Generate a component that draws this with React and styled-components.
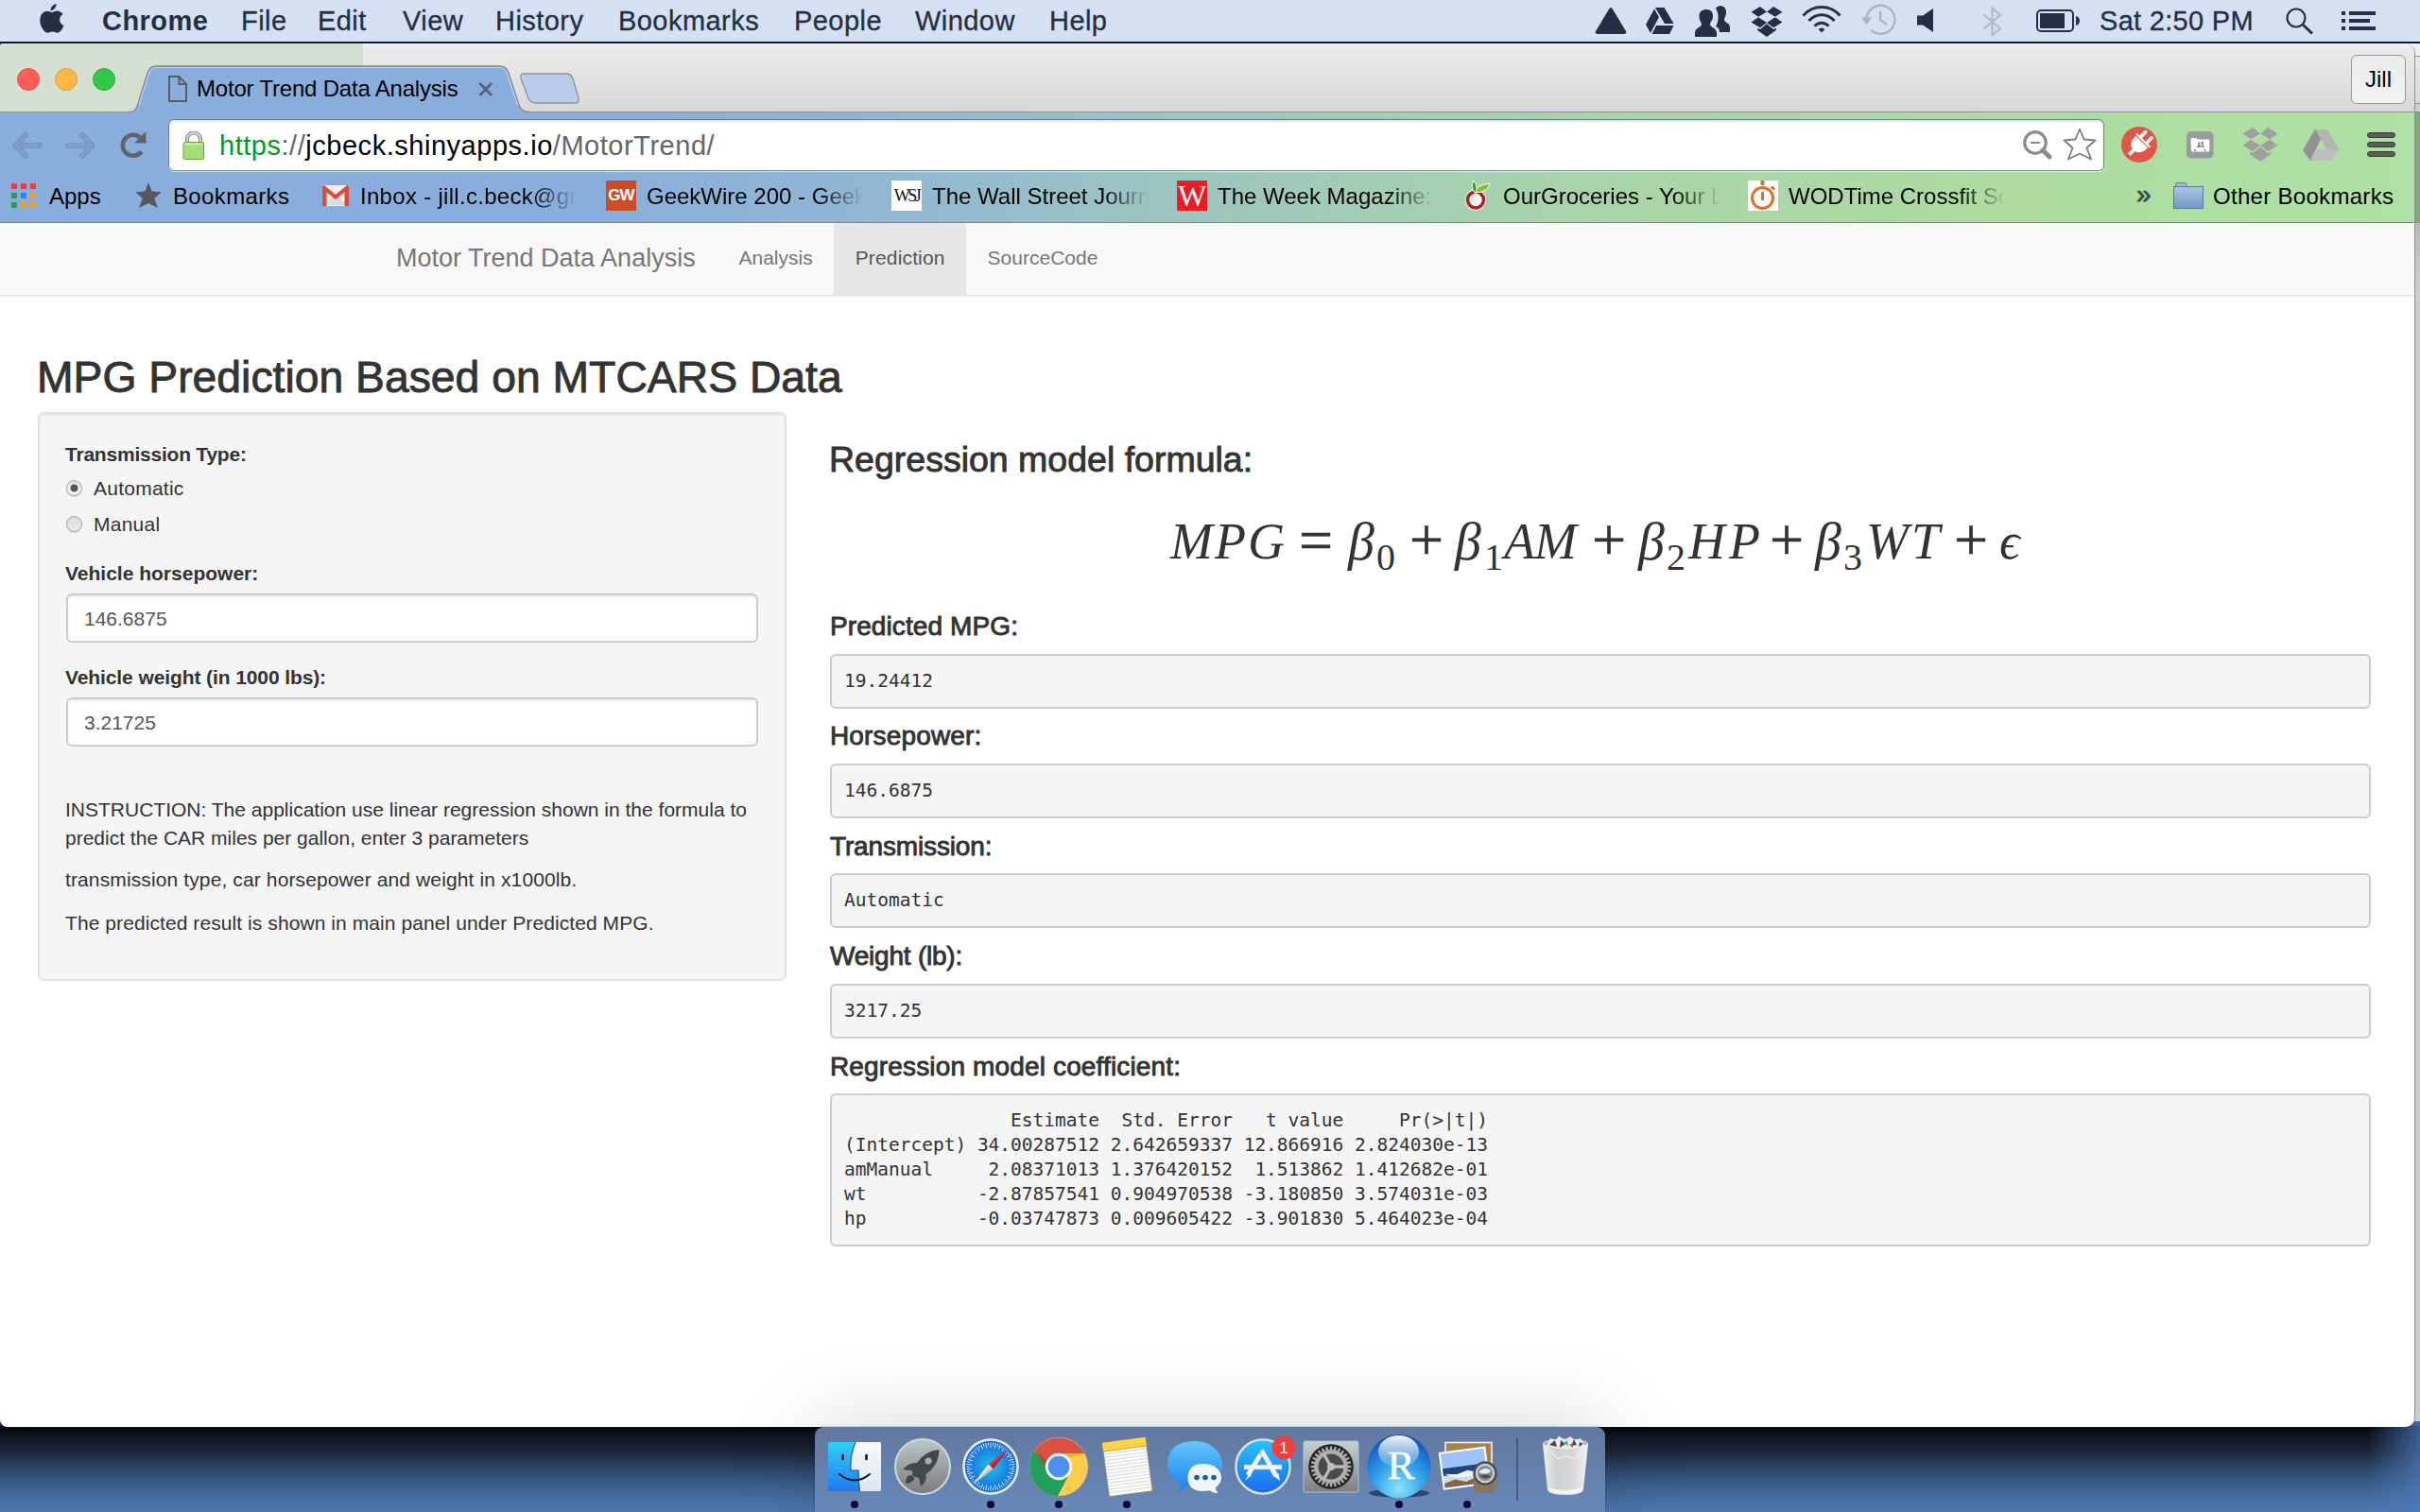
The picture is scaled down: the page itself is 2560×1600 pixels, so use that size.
import React from 'react';
import styled, { createGlobalStyle, css } from 'styled-components';

const sans = '"Liberation Sans", Arial, Helvetica, sans-serif';
const serif = '"Liberation Serif", "Times New Roman", serif';
const mono = '"DejaVu Sans Mono", Menlo, monospace';
const ink = '#232f42';

const GlobalStyle = createGlobalStyle`
  * { box-sizing: border-box; }
  body { margin: 0; overflow: hidden; }
  svg { display: block; flex: none; }
`;

const Desktop = styled.div`
  position: relative;
  width: 2560px;
  height: 1600px;
  overflow: hidden;
  font-family: ${sans};
  background:
    linear-gradient(to left, rgba(75, 120, 182, 0.75), rgba(75, 120, 182, 0) 56px),
    linear-gradient(to bottom, #1d5285 1505px, #04070c 1510px, #0d131d 1518px, #1a2436 1535px, #2c4364 1553px, #3b608e 1573px, #4871a6 1590px, #4c76ad 1600px);
`;

/* ---------- menu bar ---------- */

const MenuBar = styled.header`
  display: flex;
  align-items: flex-start;
  height: 46px;
  background: #d5e1f3;
  border-bottom: 2px solid #0d1c38;
  color: ${ink};
  font-size: 29px;
  line-height: 44px;
`;

const AppleSlot = styled.span`
  width: 108px;
  padding: 4px 0 0 42px;
`;

const Menus = styled.nav`
  display: grid;
  grid-template-columns: 147px 81px 90px 98px 130px 186px 128px 142px 577px;
  letter-spacing: 0.45px;
  white-space: nowrap;
`;

const MenuItem = styled.span`
  font-weight: ${(p) => (p.$bold ? 700 : 400)};
  -webkit-text-stroke: ${(p) => (p.$bold ? '0' : '0.3px')} ${ink};
`;

const StatusArea = styled.div`
  display: grid;
  grid-template-columns: 54px 52px 59px 54px 63px 59px 69px 57px 67px 197px 59px 40px;
  height: 44px;
`;

const StatusSlot = styled.span`
  padding-top: ${(p) => p.$top || 0}px;
`;

const Clock = styled.span`
  letter-spacing: 0.3px;
  white-space: nowrap;
  -webkit-text-stroke: 0.3px ${ink};
`;

/* ---------- browser window ---------- */

const BackWindow = styled.div`
  position: absolute;
  top: 46px;
  left: 2520px;
  width: 40px;
  height: 1458px;
  background: linear-gradient(
    to bottom,
    #f0f0f0 13px, #8f8f8f 13px, #8f8f8f 14px, #e6e6e6 14px, #dadada 63px,
    #8f8f8f 63px, #8f8f8f 64px, #cfcfcf 64px, #cfcfcf 72px,
    #7da877 72px, #7da877 190px, #b9bbba 190px, #cbcdcc 260px
  );
`;

const Window = styled.main`
  position: absolute;
  top: 46px;
  left: 0;
  width: 2555px;
  height: 1464px;
  display: flex;
  flex-direction: column;
  overflow: hidden;
  background: #fff;
  border-right: 1px solid #8f9190;
  border-radius: 4px 10px 10px 8px;
`;

const TabStrip = styled.div`
  display: flex;
  align-items: flex-start;
  flex: none;
  height: 73px;
  background:
    linear-gradient(#8d918f, #8d918f) 0 72px / 100% 1px no-repeat,
    linear-gradient(#d5dfd2, #d5dfd2) 0 0 / 384px 100% no-repeat,
    linear-gradient(to bottom, #f4f4f4, #ebebeb 4px, #e3e3e3 35px, #d7d7d7);
`;

const Lights = styled.div`
  display: flex;
  gap: 16px;
  width: 136px;
  padding: 26px 0 0 18px;
`;

const Light = styled.i`
  width: 24px;
  height: 24px;
  flex: none;
  border-radius: 50%;
  background: ${(p) => p.$fill};
  border: 1px solid ${(p) => p.$edge};
`;

const Tab = styled.div`
  position: relative;
  display: flex;
  align-items: flex-start;
  width: 424px;
  height: 52px;
  margin-top: 23px;
  padding: 11px 0 0 42px;
`;

const TabShape = styled.svg`
  position: absolute;
  inset: 0;
`;

const TabTitle = styled.span`
  position: relative;
  width: 298px;
  margin-left: 10px;
  font-size: 24px;
  line-height: 28px;
  letter-spacing: -0.2px;
  color: #000;
  white-space: nowrap;
`;

const Raised = styled.span`
  position: relative;
  padding-top: ${(p) => p.$top || 0}px;
`;

const NewTab = styled.span`
  margin: 31px 0 0 -11px;
`;

const ProfileButton = styled.button`
  width: 58px;
  height: 52px;
  margin: 12px 9px 0 auto;
  padding: 0;
  border: 1px solid #9a9a9a;
  border-radius: 6px;
  background: linear-gradient(#ebebeb, #f3f3f3);
  font: 24px/50px ${sans};
  color: #000;
`;

const Chrome = styled.div`
  flex: none;
  height: 117px;
  border-bottom: 1px solid #6f8a82;
  background: linear-gradient(
    97deg,
    #8aaedc 0, #8aaedc 640px, #92b8d3 960px, #9bc3c3 1200px, #a5cfb2 1500px,
    #a9d5a8 1750px, #addba0 2100px, #aee1a4 2540px
  );
`;

const Toolbar = styled.div`
  display: flex;
  align-items: flex-start;
  height: 66px;
`;

const NavButtons = styled.div`
  display: grid;
  grid-template-columns: 55px 58px 53px;
  width: 178px;
  padding: 20px 0 0 13px;
`;

const Omnibox = styled.div`
  display: flex;
  align-items: flex-start;
  width: 2048px;
  height: 55px;
  margin-top: 7px;
  padding-left: 14px;
  background: #fff;
  border: 1px solid #68808a;
  border-bottom-color: #7c9490;
  border-radius: 6px;
  box-shadow: 0 1px 1px rgba(255, 255, 255, 0.6), inset 0 2px 2px rgba(0, 0, 0, 0.12);
`;

const Url = styled.span`
  width: 1909px;
  margin-left: 15px;
  font-size: 29px;
  line-height: 54px;
  letter-spacing: 0.53px;
  color: #666;
  white-space: nowrap;
`;

const UrlPart = styled.span`
  color: ${(p) => (p.$secure ? '#0a9a12' : '#000')};
`;

const IconSlot = styled.span`
  padding-top: ${(p) => p.$top}px;
  margin-left: ${(p) => p.$left || 0}px;
`;

const Extensions = styled.div`
  display: grid;
  grid-template-columns: 69px 59px 64px 68px 40px;
  padding-left: 18px;
`;

const BookmarksBar = styled.div`
  display: flex;
  align-items: center;
  height: 44px;
  font-size: 24px;
  line-height: 44px;
  color: #000;
  white-space: nowrap;
`;

const BarLink = styled.a`
  display: flex;
  align-items: center;
  width: ${(p) => p.$width}px;
  padding-left: ${(p) => p.$inset || 0}px;
  letter-spacing: ${(p) => p.$spacing || 0}px;
  flex: none;
`;

const BarText = styled.span`
  margin-left: ${(p) => p.$gap || 10}px;
  padding-top: 1px;
`;

const FadeText = styled(BarText)`
  flex: none;
  width: 256px;
  mask-image: linear-gradient(to right, #000 180px, transparent 230px);
`;

const Favicon = styled.span`
  display: flex;
  align-items: center;
  justify-content: center;
  width: 32px;
  height: 32px;
  flex: none;
  background: ${(p) => p.$bg};
  color: ${(p) => p.$fg};
  font: ${(p) => p.$font};
  letter-spacing: ${(p) => p.$tight || 0}px;
`;

const More = styled.span`
  width: 39px;
  margin-left: auto;
  font-size: 28px;
  line-height: 36px;
  padding-bottom: 3px;
  color: #3d4a3c;
  -webkit-text-stroke: 0.8px #3d4a3c;
`;

/* ---------- page ---------- */

const Navbar = styled.nav`
  display: flex;
  flex: none;
  height: 78px;
  padding-left: 419px;
  background: #f8f8f8;
  border-bottom: 2px solid #e7e7e7;
  line-height: 73px;
  color: #777;
  font-size: 21px;
`;

const Brand = styled.span`
  width: 340px;
  font-size: 27px;
  line-height: 75px;
  white-space: nowrap;
`;

const NavLink = styled.a`
  padding: 0 22.5px;
  height: 76px;
  ${(p) => p.$active && css`
    background: #e7e7e7;
    color: #555;
    letter-spacing: 0.15px;
  `}
`;

const Page = styled.section`
  display: flex;
  flex-direction: column;
  padding: 60px 46px 0 40px;
  color: #333;
`;

const medium = css`
  font-weight: 400;
  -webkit-text-stroke: 0.9px #333;
`;

const PageTitle = styled.h2`
  ${medium}
  margin: 0 0 12px -1px;
  font-size: 46.3px;
  line-height: 50px;
`;

const Columns = styled.div`
  display: grid;
  grid-template-columns: 792px 1630px;
  column-gap: 46px;
  align-items: start;
`;

const Well = styled.form`
  display: flex;
  flex-direction: column;
  height: 602px;
  padding: 28px 28px 28px 27px;
  background: #f5f5f5;
  border: 2px solid #e3e3e3;
  border-radius: 6px;
  box-shadow: inset 0 2px 2px rgba(0, 0, 0, 0.05);
  font-size: 21px;
  line-height: 30px;
`;

const Label = styled.label`
  margin-top: ${(p) => p.$top || 0}px;
  font-weight: 700;
  letter-spacing: ${(p) => p.$spacing || 0}px;
`;

const Choice = styled.label`
  display: flex;
  margin-top: ${(p) => p.$top}px;
  letter-spacing: 0.25px;
`;

const Radio = styled.i`
  width: 17px;
  height: 17px;
  margin: 6px 12px 0 1px;
  border: 1px solid #a3a3a3;
  border-radius: 50%;
  background: ${(p) => (p.$on
    ? 'radial-gradient(circle, #555 0 3.6px, transparent 4.4px), linear-gradient(#e3e3e3, #f3f3f3)'
    : 'linear-gradient(#dcdcdc, #ececec)')};
  box-shadow: 0 1px 1px rgba(0, 0, 0, 0.15);
`;

const Field = styled.input`
  width: 732px;
  height: 52px;
  margin: 6px 0 0 1px;
  padding: 1px 17px 0;
  border: 2px solid #ccc;
  border-radius: 6px;
  background: #fff;
  box-shadow: inset 0 2px 2px rgba(0, 0, 0, 0.075);
  font: 21px ${sans};
  color: #555;
  outline: none;
`;

const Note = styled.p`
  margin: ${(p) => p.$top}px 0 0;
  letter-spacing: ${(p) => p.$spacing || 0}px;
  white-space: nowrap;
`;

const Results = styled.div`
  display: flex;
  flex-direction: column;
`;

const SectionTitle = styled.h3`
  ${medium}
  margin: 30px 0 37px -1px;
  font-size: 37.5px;
  line-height: 40px;
`;

const Formula = styled.div`
  display: grid;
  grid-template-columns: 136px 52px 30px 35px 48px 31px 21px 93px 49px 30px 23px 86px 48px 30px 24px 93px 48px 30px;
  height: 105px;
  padding-left: 360px;
  font-family: ${serif};
  line-height: 61px;
  white-space: nowrap;
`;

const Term = styled.i`
  font-size: 54px;
  letter-spacing: ${(p) => p.$spacing || 0}px;
`;

const Greek = styled.i`
  font-size: 56px;
`;

const Operator = styled.span`
  font-size: 64px;
  line-height: 58px;
  -webkit-text-stroke: 0.6px #333;
`;

const Index = styled.span`
  padding-top: 16px;
  font-size: 40px;
`;

const OutputTitle = styled.h4`
  ${medium}
  margin: 0;
  font-size: 28px;
  line-height: 30px;
  letter-spacing: ${(p) => p.$spacing}px;
`;

const Output = styled.pre`
  margin: 13.6px 0 14.8px;
  padding: 14px 13px;
  border: 2px solid #ccc;
  border-radius: 6px;
  background: #f5f5f5;
  font: 19.5px/26px ${mono};
`;

/* ---------- dock ---------- */

const Dock = styled.footer`
  position: absolute;
  top: 1510px;
  left: 862px;
  display: flex;
  width: 836px;
  height: 90px;
  padding-left: 6px;
  border-radius: 9px 9px 0 0;
  background: linear-gradient(#62799f, #6480ac 50%, #6888b9);
  box-shadow: 0 0 3px rgba(0, 0, 0, 0.35), 0 0 90px rgba(0, 0, 0, 0.17);
`;

const DockItem = styled.div`
  display: flex;
  flex-direction: column;
  align-items: center;
  width: 72px;
`;

const RunningDot = styled.i`
  width: 8px;
  height: 8px;
  border-radius: 50%;
  background: #050a38;
`;

const Separator = styled.i`
  width: 2px;
  height: 66px;
  margin: 12px 14px 0 16px;
  background: #3f5b8b;
`;

/* ---------- icon drawings ---------- */

const AppleLogo = () => (
  <svg width="26" height="32" viewBox="0 0 26 32" fill={ink}>
    <path d="M17.6 0c.3 3.600-2.900 7.300-6 7.200C11.200 4 14.200.6 17.600 0zM13 8.900c1.200 0 2.800-1.400 5.300-1.400 2.600 0 4.900 1.300 6.200 3.500-5.100 3-4.100 9.900.9 12-1.200 3.600-4 7.800-6.700 7.800-2 0-2.700-1.200-5.100-1.200s-3.200 1.200-5 1.200C4.800 30.800.3 24 .3 17.600c0-6.200 3.800-9.900 7.500-9.900 2.300 0 3.900 1.200 5.200 1.200z" />
  </svg>
);

const DropboxShape = ({ w, h, fill }) => (
  <svg width={w} height={h} viewBox="0 0 38 36" fill={fill}>
    <path d="M11 0 19 6.200 9 12.200 0.500 6.500zM27 0 19 6.200 29 12.200 37.500 6.500zM0.500 18.700 9 12.700 19 19 11 25zM37.500 18.700 29 12.700 19 19 27 25zM19 20.500 27 27 30 25.500V28L19 36 8 28V25.500L11 27z" />
  </svg>
);

const StatusIcons = {
  triangle: (
    <svg width="34" height="28" viewBox="0 0 34 28" fill={ink}><path d="M15.500 1Q17 -1 18.500 1L33 25Q34 28 31 28H3Q0 28 1 25z" /></svg>
  ),
  drive: (
    <svg width="30" height="28" viewBox="0 0 30 28" fill={ink}>
      <path d="M10 0H19.500L29.500 17H20zM9 1.500 14 10 5 27 0 18zM11 19H29.500L25 28H6.500z" />
    </svg>
  ),
  people: (
    <svg width="38" height="33" viewBox="0 0 38 33" fill={ink}>
      <path d="M22 3C24-1 33-1 33 7c0 4-2 6-2 8 0 3 6 3 6 8v5H26c0-4-2-5-4-6 3-4 4-14 0-19z" />
      <path d="M12 4c5 0 7 3 7 7 0 5-3 6-3 9s7 3 7 9v4H0v-4c0-6 7-6 7-9S4.500 16 4.500 11C4.500 7 7 4 12 4z" />
    </svg>
  ),
  wifi: (
    <svg width="42" height="30" viewBox="0 0 42 30" fill="none" stroke={ink} strokeWidth="3">
      <path d="M1.500 10.500C12-1.500 30-1.500 40.500 10.500M7.500 16C15 7.500 27 7.500 34.500 16M13.500 21.500C18 17 24 17 28.500 21.500" />
      <path d="M21 28.500 17.500 25Q21 22 24.500 25z" fill={ink} stroke="none" />
    </svg>
  ),
  timeMachine: (
    <svg width="38" height="34" viewBox="0 0 38 34" fill="none" stroke="#a7b3c5" strokeWidth="2.200">
      <path d="M5.500 16A15 15 0 1 1 10 27.500M20 8V17L27 22" />
      <path d="M0 14.500H11L5.500 22z" fill="#a7b3c5" stroke="none" />
    </svg>
  ),
  speaker: (
    <svg width="20" height="26" viewBox="0 0 20 26" fill={ink}><path d="M0 7.500H6L17 0V25L6 17.500H0z" /></svg>
  ),
  bluetooth: (
    <svg width="22" height="32" viewBox="0 0 22 32" fill="none" stroke="#adb9ca" strokeWidth="2"><path d="M1.500 8.500 19 23 10.500 30.500V1.500L19 9 1.500 23.500" /></svg>
  ),
  battery: (
    <svg width="47" height="24" viewBox="0 0 47 24" fill={ink}>
      <rect x="1" y="1" width="38" height="22" rx="4" fill="none" stroke={ink} strokeWidth="2" />
      <rect x="4" y="4" width="26" height="16" /><path d="M42 7Q46 8 46 12T42 17z" />
    </svg>
  ),
  search: (
    <svg width="30" height="29" viewBox="0 0 30 29" fill="none" stroke={ink} strokeWidth="2.200"><circle cx="11" cy="11" r="9.500" /><path d="M18 18 28 27.500" strokeWidth="3" /></svg>
  ),
  list: (
    <svg width="37" height="20" viewBox="0 0 37 20" fill={ink}>
      <path d="M0 0h4v4H0zM8 0h28v4H8zM0 8h4v4H0zM8 8h22v4H8zM0 16h4v4H0zM8 16h28v4H8z" />
    </svg>
  ),
};

const Arrow = ({ flip }) => (
  <svg width="33" height="30" viewBox="0 0 33 30" fill="none" strokeLinecap="round" strokeLinejoin="round">
    <g transform={flip ? 'translate(33 0) scale(-1 1)' : undefined}>
      <path d="M14 4 3.500 15 14 26M3.500 15H29" stroke="#6f91c0" strokeWidth="5.600" />
      <path d="M14 4 3.500 15 14 26M3.500 15H29" stroke="#7d9dcb" strokeWidth="4" />
    </g>
  </svg>
);

const Reload = () => (
  <svg width="31" height="30" viewBox="0 0 31 30">
    <path d="M23.500 21.500A11 11 0 1 1 22 6.500" fill="none" stroke="#5f646c" strokeWidth="4.600" />
    <path d="M28.500 0V12.500H16z" fill="#5f646c" />
  </svg>
);

const PageIcon = () => (
  <svg width="20" height="28" viewBox="0 0 20 28" fill="none" stroke="#5a5d63" strokeWidth="2"><path d="M1 1H11.500L19 9V27H1zM11.500 1V9H19" /></svg>
);

const Lock = () => (
  <svg width="24" height="31" viewBox="0 0 24 31">
    <path d="M5 14V8a7 6.500 0 0 1 14 0V14" fill="none" stroke="#8c8c8c" strokeWidth="4" />
    <path d="M5 14V8a7 6.500 0 0 1 14 0V14" fill="none" stroke="#d9d9d9" strokeWidth="1.800" />
    <rect x="1" y="11.500" width="21.500" height="18" rx="1.500" fill="#a4dd79" stroke="#6aa646" />
    <path d="M2 13.500h19.500" stroke="#c9f0ab" strokeWidth="2" />
  </svg>
);

const starPath = 'M18 1.500 22.500 12.500 34.500 13.500 25.500 21.500 30 33.500 18 27.500 6 33.500 10.500 21.500 1.500 13.500 13.500 12.500z';

const DriveGray = () => (
  <svg width="38" height="34" viewBox="0 0 38 34">
    <path d="M13 0H26L38 21 31 33H8L0 22zM19 10 13.500 21H25z" fillRule="evenodd" fill="#b5b5b5" />
    <path d="M13 0 19 10 8 33 0 22z" fill="#929292" /><path d="M8 33 13.500 21H38L31 33z" fill="#bdbdbd" />
  </svg>
);

const Plug = () => (
  <svg width="38" height="38" viewBox="0 0 38 38">
    <circle cx="19" cy="19" r="19" fill="#e0574a" />
    <g transform="rotate(45 19 19)" fill="#fff">
      <rect x="12.500" y="3" width="3.600" height="11" rx="1.800" /><rect x="21.500" y="3" width="3.600" height="11" rx="1.800" />
      <path d="M8.500 12H29V14H8.500z" />
      <path d="M9.800 15H27.700C28.200 22 25 26.500 20.800 27V34H17V27C12.500 26.500 9.300 22 9.800 15z" />
    </g>
  </svg>
);

const FolderBadge = () => (
  <svg width="29" height="29" viewBox="0 0 29 29">
    <rect width="28.500" height="28.500" rx="5" fill="#9b9b9b" />
    <path d="M4.500 9Q4.500 7 6.500 7H10.500L12 8.500H23Q24.500 8.500 24.500 10L24 21.500H5z" fill="#fff" />
    <path d="M10.500 17Q11 15 12.500 14.500 11.500 11.500 13 11.200 15 11 14.200 14.200 16 15 16 17zM16.500 17Q17 15 15.800 13.800L15.500 11 18 10.500 17.500 13.500Q19 15 18.500 17z" fill="#8b8b8b" />
    <path d="M9 19v2M19.500 19v2" stroke="#9b9b9b" strokeWidth="2" />
  </svg>
);

const Hamburger = () => (
  <svg width="30" height="27" viewBox="0 0 30 27" fill="#5a5f58" stroke="#373b36">
    <rect x=".5" y=".5" width="29" height="5" rx="2.500" /><rect x=".5" y="10.500" width="29" height="5" rx="2.500" /><rect x=".5" y="20.500" width="29" height="5" rx="2.500" />
  </svg>
);

const AppsGrid = () => {
  const colors = ['#ee3e38', '#ee3e38', '#ee3e38', '#2f9a55', '#2b86ee', '#f39c1f', '#2f9a55', '#f39c1f', '#f39c1f'];
  return (
    <svg width="26" height="27" viewBox="0 0 26 27">
      {colors.map((c, i) => <rect key={i} x={(i % 3) * 10} y={Math.floor(i / 3) * 10} width="6" height="6" fill={c} />)}
    </svg>
  );
};

const Gmail = () => (
  <svg width="28" height="22" viewBox="0 0 28 22">
    <rect width="28" height="22" rx="1.500" fill="#f1f1f1" /><path d="M2 21 14 9 26 21z" fill="#dcdcdc" />
    <path d="M0 2Q0 0 2 0L14 10 26 0Q28 0 28 2V22H23.500V7.500L14 15 4.500 7.500V22H0z" fill="#dc4a3d" />
  </svg>
);

const Grocery = () => (
  <svg width="32" height="32" viewBox="0 0 32 32">
    <ellipse cx="14" cy="20.500" rx="11" ry="11.500" fill="#fff" opacity=".75" />
    <ellipse cx="14" cy="20.500" rx="8.500" ry="8.500" fill="#f3f3f3" stroke="#a9202c" strokeWidth="3.500" />
    <path d="M14 13Q13 5 29 3 28 12 14 13z" fill="#86c03a" stroke="#fff" /><path d="M13 13Q8 7 12 0 17 6 14 13z" fill="#3f9c45" stroke="#fff" />
  </svg>
);

const Stopwatch = () => (
  <svg width="32" height="32" viewBox="0 0 32 32">
    <rect width="32" height="32" fill="#fff" /><circle cx="15.500" cy="18.500" r="11" fill="none" stroke="#dd6f24" strokeWidth="3" />
    <path d="M15.500 12V21M25 6.500l3 3" stroke="#dd6f24" strokeWidth="3" /><rect x="13.500" y="0" width="4" height="5" fill="#dd6f24" />
  </svg>
);

const Folder = () => (
  <svg width="32" height="29" viewBox="0 0 32 29">
    <defs><linearGradient id="folder" x2="0" y2="1"><stop stopColor="#abc5e2" /><stop offset="1" stopColor="#6f98c6" /></linearGradient></defs>
    <path d="M2.500 6V2Q2.500.5 4 .5H12.500Q14 .5 14 2V6z" fill="#9bb7da" stroke="#5f83b0" />
    <rect x=".5" y="4.500" width="31" height="23" fill="url(#folder)" stroke="#577cab" />
  </svg>
);

/* Dock drawings share a 72 x 78 cell centred on (36, 42). */
const DockSvg = ({ children }) => <svg width="72" height="78" viewBox="0 0 72 78">{children}</svg>;

const ring = (n, fn) => Array.from({ length: n }, (_, i) => fn((i * 360) / n, i));

const Finder = () => (
  <DockSvg>
    <defs>
      <linearGradient id="fa" x2="0" y2="1"><stop stopColor="#2fd0fa" /><stop offset="1" stopColor="#2477ef" /></linearGradient>
      <linearGradient id="fb" x2="0" y2="1"><stop stopColor="#f8f8fa" /><stop offset="1" stopColor="#dbe7f3" /></linearGradient>
    </defs>
    <rect x="8" y="16" width="56" height="52" rx="2" fill="url(#fa)" />
    <path d="M37 16H62Q64 16 64 18V66Q64 68 62 68H41.500Q40 58 40 46H32Q31 30 37 16z" fill="url(#fb)" />
    <path d="M37 16Q31 30 32 46H40Q40 58 41.500 68" fill="none" stroke="#1e5a93" strokeWidth="1.200" />
    <path d="M20 50Q36 63 52 50" fill="none" stroke="#0d1420" strokeWidth="2" strokeLinecap="round" />
    <path d="M23.700 30v4M48.500 30v4" stroke="#0d1420" strokeWidth="2.600" strokeLinecap="round" />
  </DockSvg>
);

const Launchpad = () => (
  <DockSvg>
    <defs><linearGradient id="lp" x2="0" y2="1"><stop stopColor="#b9c7ca" /><stop offset="1" stopColor="#7b7b7b" /></linearGradient></defs>
    <circle cx="36" cy="42" r="29" fill="url(#lp)" stroke="#cfd8dc" strokeWidth="2" />
    <g fill="#43474a">
      <path d="M53.500 24Q39 25 30 38 22 37 15 45L24 46 25.500 48Q24 51 27 52.500L32 54 34 63Q41 57 39.500 50 53 41 53.500 24z" />
      <path d="M24 51Q18 51 18 60 26 59 27.500 54z" />
    </g>
    <circle cx="42" cy="36" r="3.500" fill="#a8b0b2" />
  </DockSvg>
);

const Safari = () => (
  <DockSvg>
    <defs><radialGradient id="sf"><stop stopColor="#22bdec" /><stop offset="1" stopColor="#1766dd" /></radialGradient></defs>
    <circle cx="36" cy="42" r="28.500" fill="url(#sf)" stroke="#e9ebee" strokeWidth="2.600" />
    {ring(60, (a, i) => <path key={i} d={i % 2 ? 'M36 16.500v3' : 'M36 16.500v5.500'} stroke="#d6ecfb" strokeWidth="0.900" transform={`rotate(${a} 36 42)`} />)}
    <path d="M54.500 23.500 33.500 39.500 38.500 44.500z" fill="#ee2b33" /><path d="M54.500 23.500 36 42 38.500 44.500z" fill="#bf1c26" />
    <path d="M17.500 60.500 33.500 39.500 38.500 44.500z" fill="#f5f5f5" /><path d="M17.500 60.500 36 42 38.500 44.500z" fill="#c2c6ca" />
  </DockSvg>
);

const ChromeIcon = () => (
  <DockSvg>
    <circle cx="36" cy="42" r="31" fill="#ffcd4e" />
    <path d="M36 42 23 47 10.500 24.500A31 31 0 0 1 63.300 28H36z" fill="#dc4f44" />
    <path d="M10.200 25A31 31 0 0 0 35 73L46.500 51 36 42 24 46.500z" fill="#21a05c" />
    <path d="M10.200 25 24 47 27 38z" fill="#188049" opacity=".5" /><path d="M36 28H63.300L47 33z" fill="#c69a2b" opacity=".45" />
    <circle cx="36" cy="42" r="14.200" fill="#f5f5f5" /><circle cx="36" cy="42" r="11.200" fill="#4e8df2" />
  </DockSvg>
);

const Notes = () => (
  <DockSvg>
    <g transform="rotate(-7.500 36 42)">
      <rect x="13.500" y="15" width="46" height="56" fill="#fdfdfc" stroke="#8f865c" strokeWidth=".8" />
      {ring(13, (a, i) => <path key={i} d={`M13.500 ${26 + i * 3.400}h46`} stroke="#d5d5d5" strokeWidth="0.900" />)}
      <rect x="13.500" y="13.500" width="46" height="9.500" fill="#fed446" /><path d="M13.500 23h46" stroke="#d3a021" />
    </g>
  </DockSvg>
);

const Messages = () => (
  <DockSvg>
    <defs><linearGradient id="ms" x2="0" y2="1"><stop stopColor="#62c5fa" /><stop offset="1" stopColor="#1c84ee" /></linearGradient></defs>
    <path d="M36 15C53 15 65 26 65 40S53 63 36 63Q31 63 27.500 62 24 67.500 16.500 67.500 21 64 20.500 59.500 7 52 7 39 8 15 36 15z" fill="url(#ms)" />
    <path d="M45 39C56 39 64 45 64 53.500 64 58 61.500 61.500 58 64Q57.500 67 60.500 70 55 70 52 67.200 29 71 28.500 54 29 39 45 39z" fill="#f0f5fb" />
    <g fill="#175ea9"><circle cx="38" cy="53.500" r="2.800" /><circle cx="47" cy="53.500" r="2.800" /><circle cx="56" cy="53.500" r="2.800" /></g>
  </DockSvg>
);

const BadgeText = styled.text`
  font: 17px ${sans};
  fill: #fff;
  text-anchor: middle;
`;

const AppStore = () => (
  <DockSvg>
    <defs><linearGradient id="as" x2="0" y2="1"><stop stopColor="#26c6fa" /><stop offset="1" stopColor="#1d68ef" /></linearGradient></defs>
    <circle cx="36" cy="42" r="28.600" fill="url(#as)" stroke="#dfe3e8" strokeWidth="2.400" />
    <g stroke="#6e9cd4" strokeWidth="6"><path d="M16 42.500H56M33.500 29 20 51M34.500 24.500 50 52" /></g>
    <g stroke="#f2f4f7" strokeWidth="4.600"><path d="M16 42.500H56M33.500 29 20 51M34.500 24.500 50 52" /></g>
    <path d="M21.500 49 17 57 24 51zM47.500 52 54 57 52.500 49z" fill="#f2f4f7" />
    <circle cx="58" cy="22" r="12.500" fill="#f03e41" />
    <BadgeText x="58" y="28">1</BadgeText>
  </DockSvg>
);

const Settings = () => (
  <DockSvg>
    <defs>
      <linearGradient id="st" x2="0" y2="1"><stop stopColor="#c5d2d6" /><stop offset="1" stopColor="#7b7f80" /></linearGradient>
    </defs>
    <rect x="7" y="15" width="58" height="54" rx="2" fill="url(#st)" stroke="#b6c2c6" />
    <circle cx="36" cy="42" r="23.800" fill="#222426" />
    {ring(28, (a, i) => <path key={i} d="M34.400 25 35 20.500h2L37.600 25z" fill="#a9a9a7" transform={`rotate(${a} 36 42)`} />)}
    <circle cx="36" cy="42" r="15.500" fill="#4a4b4c" stroke="#b0b0ae" strokeWidth="4" />
    {[0, 120, 240].map((a) => <path key={a} d="M36 42H51" stroke="#bcbcba" strokeWidth="3.400" transform={`rotate(${a} 36 42)`} />)}
    <circle cx="36" cy="42" r="4" fill="#bcbcba" />
  </DockSvg>
);

const RLetter = styled.text`
  font: 43px ${serif};
  fill: #fff;
  stroke: #fff;
  stroke-width: 0.5px;
  text-anchor: middle;
`;

const RStudio = () => (
  <DockSvg>
    <defs>
      <radialGradient id="rs" cx=".5" cy=".85" r=".85"><stop stopColor="#8ae6fc" /><stop offset=".5" stopColor="#2f9be8" /><stop offset="1" stopColor="#0f50b8" /></radialGradient>
      <linearGradient id="rg" x2="0" y2="1"><stop stopColor="#fff" stopOpacity=".95" /><stop offset="1" stopColor="#fff" stopOpacity=".1" /></linearGradient>
    </defs>
    <ellipse cx="36" cy="70" rx="32" ry="4.500" fill="#2c436b" />
    <circle cx="36" cy="41.600" r="33.600" fill="url(#rs)" />
    <ellipse cx="35.500" cy="26" rx="21.500" ry="17" fill="url(#rg)" />
    <RLetter x="38" y="55">R</RLetter>
  </DockSvg>
);

const Preview = () => (
  <DockSvg>
    <rect x="13" y="16.500" width="49" height="42" fill="#a5824f" stroke="#f3f3f3" strokeWidth="1.600" />
    <g transform="rotate(-7.500 34 43)">
      <rect x="8" y="23.500" width="50" height="40" fill="#fff" />
      <rect x="10" y="25.500" width="46" height="17" fill="#9cc4fa" /><rect x="10" y="41" width="46" height="9" fill="#22437f" />
      <rect x="10" y="49" width="46" height="12.500" fill="#c9dbe6" /><path d="M10 57 22 54 33 58 46 54 50 61.500H10z" fill="#80664a" />
      <path d="M12 47 24 49 36 46 48 50 40 53 20 52z" fill="#eef5f9" />
    </g>
    <path d="M43 50H67V64Q66 70 55 70T43 64z" fill="#8c7659" />
    <circle cx="55" cy="49" r="11.500" fill="#cfd2d3" stroke="#4c4f50" strokeWidth="2.500" /><circle cx="55" cy="49" r="8" fill="#7d8b93" />
    <path d="M48 48Q54 41 61 46 58 52 48 48z" fill="#e8ecee" /><path d="M49 52Q55 49 61 52 56 57 49 52z" fill="#5b4b38" />
  </DockSvg>
);

const Trash = () => (
  <DockSvg>
    <defs><linearGradient id="tr" x2="1" y2="0"><stop stopColor="#f2f2f2" /><stop offset=".3" stopColor="#cfd0d1" /><stop offset=".7" stopColor="#d9d9d9" /><stop offset="1" stopColor="#f5f5f5" /></linearGradient></defs>
    <ellipse cx="36" cy="18" rx="24" ry="5" fill="#a9b1bb" stroke="#dfe2e6" />
    <path d="M16 20 20 12 26 14 29 9.500 35 14 41 10 46 14 52 12 57 20 36 25z" fill="#ececec" />
    <path d="M12 18Q36 29 60 18L55 66Q54 72 36 72T17 66z" fill="url(#tr)" />
    <path d="M19 19 25 14 27 21zM31 14 36 18 30 22zM45 13 48 19 42 20zM51 16 55 18 50 21z" fill="#474b50" />
    <path d="M34 17l4-3 1 6z" fill="#37b1b5" /><path d="M40 19l4-2v5z" fill="#c4512c" />
    <path d="M21 26 28 34 36 31 45 34 52 27" fill="none" stroke="#ececec" strokeWidth="1.400" /><path d="M18 64Q36 70 54 64L53.500 67Q51 71 36 71T18.500 67z" fill="#f4f4f4" />
  </DockSvg>
);

/* ---------- data ---------- */

const menus = ['Chrome', 'File', 'Edit', 'View', 'History', 'Bookmarks', 'People', 'Window', 'Help'];

const favicons = {
  gw: <Favicon $bg="#cb4d28" $fg="#fff" $font={`bold 17px ${sans}`} $tight={-1}>GW</Favicon>,
  wsj: <Favicon $bg="#fff" $fg="#111" $font={`18px ${serif}`} $tight={-2.500}>WSJ</Favicon>,
  week: <Favicon $bg="#ec1c24" $fg="#fff" $font={`32px ${serif}`}>W</Favicon>,
};

const bookmarks = [
  ['GeekWire 200 - Geek', favicons.gw],
  ['The Wall Street Journ', favicons.wsj],
  ['The Week Magazine:', favicons.week],
  ['OurGroceries - Your L', <Grocery />],
  ['WODTime Crossfit So', <Stopwatch />],
];

const outputs = [
  ['Predicted MPG:', '19.24412', 0.1],
  ['Horsepower:', '146.6875', 0.15],
  ['Transmission:', 'Automatic', -0.15],
  ['Weight (lb):', '3217.25', -0.22],
  ['Regression model coefficient:', [
    '               Estimate  Std. Error   t value     Pr(>|t|)',
    '(Intercept) 34.00287512 2.642659337 12.866916 2.824030e-13',
    'amManual     2.08371013 1.376420152  1.513862 1.412682e-01',
    'wt          -2.87857541 0.904970538 -3.180850 3.574031e-03',
    'hp          -0.03747873 0.009605422 -3.901830 5.464023e-04',
  ].join('\n'), 0.15],
];

const dockApps = [
  [<Finder />, true], [<Launchpad />, false], [<Safari />, true], [<ChromeIcon />, true], [<Notes />, true],
  [<Messages />, false], [<AppStore />, false], [<Settings />, false], [<RStudio />, true], [<Preview />, true],
];

export default function App() {
  return (
    <Desktop>
      <GlobalStyle />
      <MenuBar>
        <AppleSlot><AppleLogo /></AppleSlot>
        <Menus>{menus.map((m, i) => <MenuItem key={m} $bold={i === 0}>{m}</MenuItem>)}</Menus>
        <StatusArea>
          <StatusSlot $top={8}>{StatusIcons.triangle}</StatusSlot>
          <StatusSlot $top={8}>{StatusIcons.drive}</StatusSlot>
          <StatusSlot $top={6}>{StatusIcons.people}</StatusSlot>
          <StatusSlot $top={7}><DropboxShape w={34} h={32} fill={ink} /></StatusSlot>
          <StatusSlot $top={6}>{StatusIcons.wifi}</StatusSlot>
          <StatusSlot $top={4}>{StatusIcons.timeMachine}</StatusSlot>
          <StatusSlot $top={9}>{StatusIcons.speaker}</StatusSlot>
          <StatusSlot $top={7}>{StatusIcons.bluetooth}</StatusSlot>
          <StatusSlot $top={10}>{StatusIcons.battery}</StatusSlot>
          <Clock>Sat 2:50 PM</Clock>
          <StatusSlot $top={8}>{StatusIcons.search}</StatusSlot>
          <StatusSlot $top={12}>{StatusIcons.list}</StatusSlot>
        </StatusArea>
      </MenuBar>

      <BackWindow />
      <Window>
        <TabStrip>
          <Lights>
            <Light $fill="#fc5f5a" $edge="#e2504b" />
            <Light $fill="#fdb843" $edge="#dfa03a" />
            <Light $fill="#32c748" $edge="#27ad38" />
          </Lights>
          <Tab>
            <TabShape width="424" height="52" viewBox="0 0 424 52">
              <path d="M0 52V49.500C6 49.500 8 47 9.500 42L20 8C22 3 24 1 30 1H392C398 1 400 3 402 8L413 42C415 47 417 49.500 424 49.500V52z" fill="#8aaedc" />
              <path d="M0 49.500C6 49.500 8 47 9.500 42L20 8C22 3 24 1 30 1H392C398 1 400 3 402 8L413 42C415 47 417 49.500 424 49.500" fill="none" stroke="#84898f" strokeWidth="1.300" />
              <path d="M11 42 21.500 9C23 4.500 25 2.500 30 2.500H392C397 2.500 399 4.500 400.500 9L411.500 42" fill="none" stroke="#bcd2ee" strokeWidth="1.200" />
            </TabShape>
            <Raised><PageIcon /></Raised>
            <TabTitle>Motor Trend Data Analysis</TabTitle>
            <Raised $top={7}>
              <svg width="16" height="15" viewBox="0 0 16 15" stroke="#55637a" strokeWidth="2.800"><path d="M1.500 1 14 14M14 1 1.500 14" /></svg>
            </Raised>
          </Tab>
          <NewTab>
            <svg width="64" height="34" viewBox="0 0 64 34">
              <path d="M5 1H50Q55 1 57 6L63 27Q64 32 60 32H18Q12 32 10 27L2 6Q1 1 5 1z" fill="#b8cdee" stroke="#8d9199" strokeWidth="1.300" />
            </svg>
          </NewTab>
          <ProfileButton>Jill</ProfileButton>
        </TabStrip>

        <Chrome>
          <Toolbar>
            <NavButtons>
              <Arrow />
              <Arrow flip />
              <Reload />
            </NavButtons>
            <Omnibox>
              <IconSlot $top={12}><Lock /></IconSlot>
              <Url><UrlPart $secure>https</UrlPart>://<UrlPart>jcbeck.shinyapps.io</UrlPart>/MotorTrend/</Url>
              <IconSlot $top={11} $left={-1}>
                <svg width="31" height="31" viewBox="0 0 31 31" fill="none" stroke="#8c8c8c"><circle cx="13" cy="13" r="11.300" strokeWidth="3.200" /><path d="M8 13h10" strokeWidth="2" /><path d="M21 21 28 28" strokeWidth="5" strokeLinecap="round" /></svg>
              </IconSlot>
              <IconSlot $top={8} $left={11}>
                <svg width="36" height="36" viewBox="0 0 36 36" fill="#fff" stroke="#7d7d7d" strokeWidth="1.800" strokeLinejoin="round"><path d={starPath} /></svg>
              </IconSlot>
            </Omnibox>
            <Extensions>
              <IconSlot $top={15}><Plug /></IconSlot>
              <IconSlot $top={20}><FolderBadge /></IconSlot>
              <IconSlot $top={16}><DropboxShape w={38} h={36} fill="#9f9f9f" /></IconSlot>
              <IconSlot $top={18}><DriveGray /></IconSlot>
              <IconSlot $top={21}><Hamburger /></IconSlot>
            </Extensions>
          </Toolbar>
          <BookmarksBar>
            <BarLink $width={142} $inset={12}><AppsGrid /><BarText $gap={14}>Apps</BarText></BarLink>
            <BarLink $width={197} $spacing={0.36}>
              <svg width="30" height="30" viewBox="0 0 36 36" fill="#55585c"><path d={starPath} /></svg>
              <BarText $gap={11}>Bookmarks</BarText>
            </BarLink>
            <BarLink $width={302} $inset={2} $spacing={0.3}><Gmail /><FadeText $gap={12}>Inbox - jill.c.beck@gm</FadeText></BarLink>
            {bookmarks.map(([title, icon]) => (
              <BarLink key={title} $width={302}>{icon}<FadeText $gap={11}>{title}</FadeText></BarLink>
            ))}
            <More>»</More>
            <BarLink $width={255} $spacing={0.3}><Folder /><BarText>Other Bookmarks</BarText></BarLink>
          </BookmarksBar>
        </Chrome>

        <Navbar>
          <Brand>Motor Trend Data Analysis</Brand>
          <NavLink>Analysis</NavLink>
          <NavLink $active>Prediction</NavLink>
          <NavLink>SourceCode</NavLink>
        </Navbar>

        <Page>
          <PageTitle>MPG Prediction Based on MTCARS Data</PageTitle>
          <Columns>
            <Well>
              <Label $spacing={-0.22}>Transmission Type:</Label>
              <Choice $top={6}><Radio $on />Automatic</Choice>
              <Choice $top={8}><Radio />Manual</Choice>
              <Label $top={22}>Vehicle horsepower:</Label>
              <Field readOnly value="146.6875" />
              <Label $top={22} $spacing={-0.1}>Vehicle weight (in 1000 lbs):</Label>
              <Field readOnly value="3.21725" />
              <Note $top={52}>INSTRUCTION: The application use linear regression shown in the formula to<br />predict the CAR miles per gallon, enter 3 parameters</Note>
              <Note $top={14} $spacing={0.12}>transmission type, car horsepower and weight in x1000lb.</Note>
              <Note $top={16} $spacing={0.08}>The predicted result is shown in main panel under Predicted MPG.</Note>
            </Well>
            <Results>
              <SectionTitle>Regression model formula:</SectionTitle>
              <Formula>
                <Term $spacing={2}>MPG</Term><Operator>=</Operator>
                <Greek>β</Greek><Index>0</Index><Operator>+</Operator>
                <Greek>β</Greek><Index>1</Index><Term $spacing={-1}>AM</Term><Operator>+</Operator>
                <Greek>β</Greek><Index>2</Index><Term $spacing={4}>HP</Term><Operator>+</Operator>
                <Greek>β</Greek><Index>3</Index><Term $spacing={3}>WT</Term><Operator>+</Operator>
                <Term>ϵ</Term>
              </Formula>
              {outputs.map(([title, value, spacing]) => (
                <React.Fragment key={title}>
                  <OutputTitle $spacing={spacing}>{title}</OutputTitle>
                  <Output>{value}</Output>
                </React.Fragment>
              ))}
            </Results>
          </Columns>
        </Page>
      </Window>

      <Dock>
        {dockApps.map(([icon, running], i) => (
          <DockItem key={i}>{icon}{running && <RunningDot />}</DockItem>
        ))}
        <Separator />
        <DockItem><Trash /></DockItem>
      </Dock>
    </Desktop>
  );
}
